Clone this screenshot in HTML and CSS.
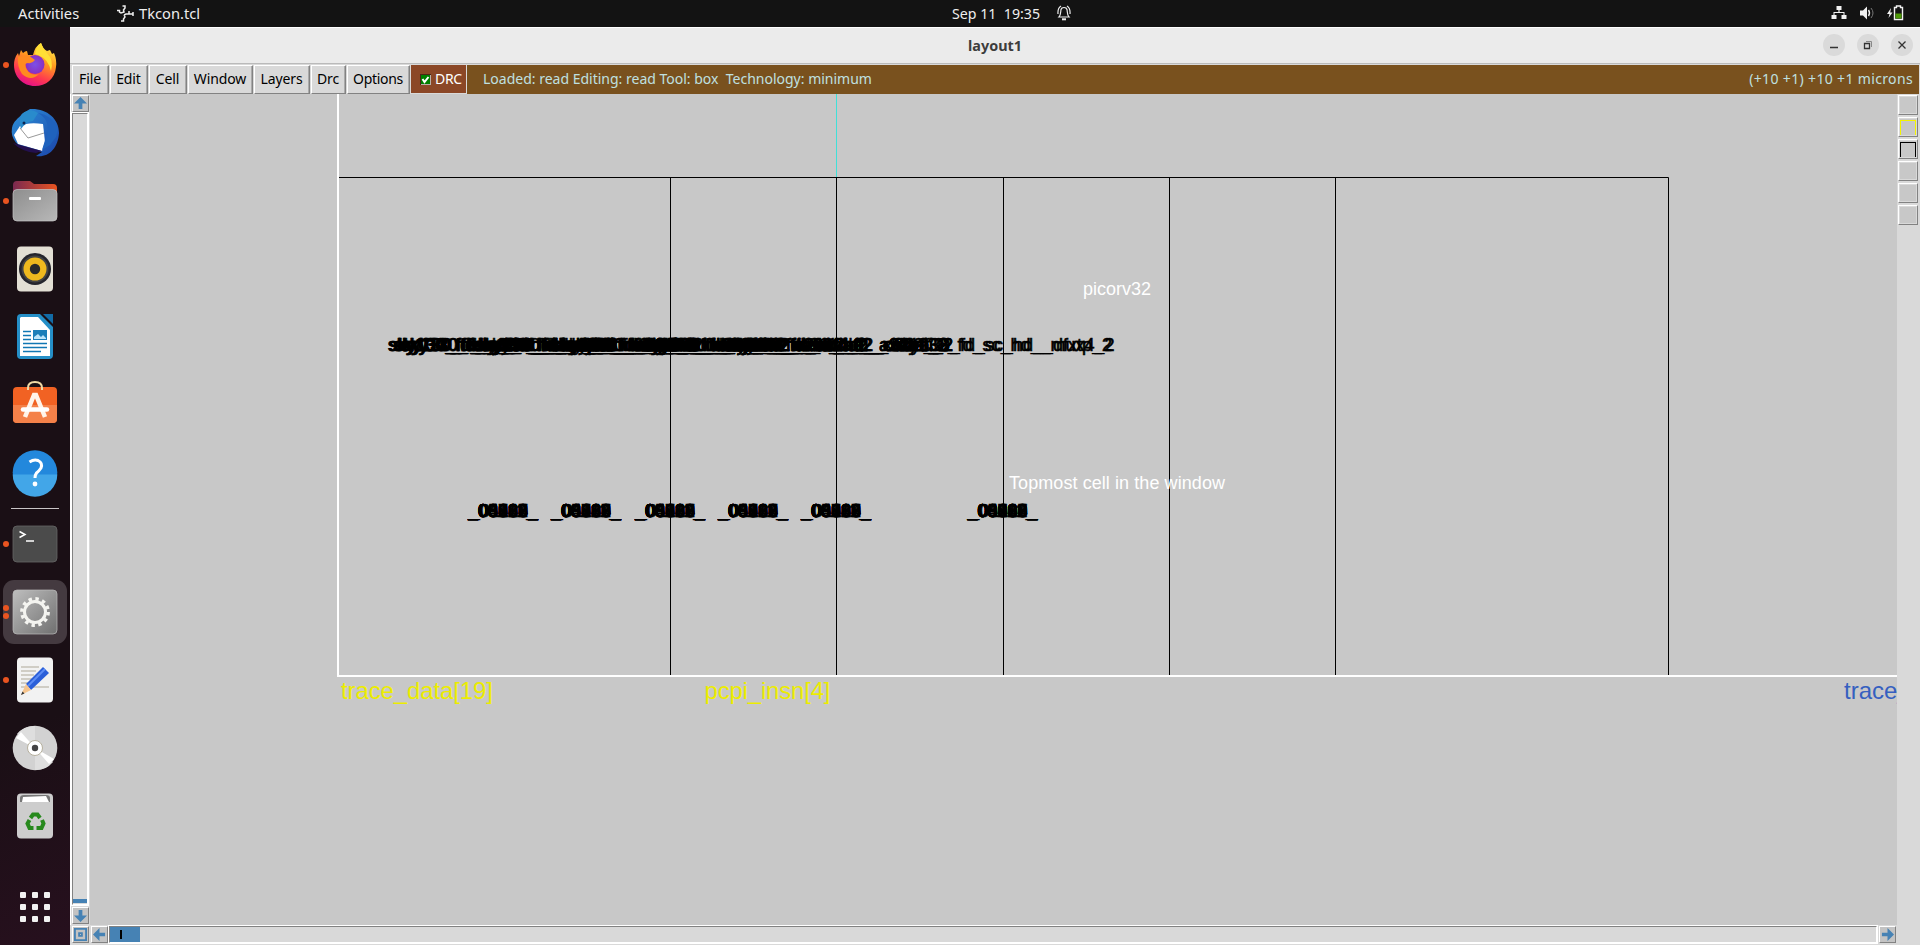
FILE: index.html
```html
<!DOCTYPE html>
<html lang="en">
<head>
<meta charset="utf-8">
<title>layout1</title>
<link rel="stylesheet" href="styles.css">
</head>
<body>
<header class="topbar">
  <span class="activities">Activities</span>
  <svg class="app-icon" width="17" height="17" viewBox="0 0 17 17" fill="none" stroke="#eee" stroke-width="1.500"><path d="M5.500 1H8V3L6.500 5L7 7L4 8L2.500 7V5.500H0M7 10L8 12L6.500 14V16H4M7 10L9 9H16M12 6V9M16 7V11"/></svg>
  <span class="app-name">Tkcon.tcl</span>
  <span class="clock">Sep 11&nbsp; 19:35</span>
  <svg class="bell" width="14" height="16" viewBox="0 0 14 16" fill="none" stroke="#eee" stroke-width="1.2"><path d="M2 12C4 10 3.5 7 4 4.500Q4.500 2.500 7 2.500T10 4.500C10.500 7 10 10 12 12ZM1 9Q0.500 3 4 1M13 9Q13.500 3 10 1"/><path d="M5 14.300H9" stroke-width="2"/></svg>
  <span class="tray">
    <svg width="16" height="14" viewBox="0 0 16 14" fill="#f2f2f2"><path d="M5.500 0H10.500V4H8.600V6H13.500V9H15.500V13H10.500V9H12.500V7H3.500V9H5.500V13H0.500V9H2.500V6H7.400V4H5.500Z"/></svg>
    <svg width="16" height="14" viewBox="0 0 16 14" fill="none" stroke="#f2f2f2"><path d="M1 4.500H4L8 0.500V13.500L4 9.500H1Z" fill="#f2f2f2" stroke="none"/><path d="M9.500 4Q11.500 7 9.500 10" stroke-width="1.400"/><path d="M12 2Q16 7 12 12" stroke="#777"/></svg>
    <svg width="17" height="16" viewBox="0 0 17 16"><path d="M4 3L0 9H2.500L1.500 13L5.500 7.500H3.200Z" fill="#f2f2f2"/><path d="M7.500 2.500H9.500V1H13.500V2.500H15.500V14.500H7.500Z" fill="none" stroke="#f2f2f2" stroke-width="1.400"/><path d="M8.500 8.500H14.500V13.500H8.500Z" fill="#4e9a06"/></svg>
  </span>
</header>
<div class="desktop">
  <nav class="dock">
    <div class="dock-item"><i class="dot"></i>
      <svg viewBox="0 0 70 68"><defs><linearGradient id="ff" x1=".8" y1="0" x2=".35" y2="1"><stop offset="0" stop-color="#fff44f"/><stop offset=".4" stop-color="#ff9a1e"/><stop offset=".75" stop-color="#ff3850"/><stop offset="1" stop-color="#e3108a"/></linearGradient><radialGradient id="fp"><stop offset="0" stop-color="#7b50e8"/><stop offset="1" stop-color="#8a2fc0"/></radialGradient></defs><path d="M21 19L23 22Q25 20 27 20L28 24H33Q35 15 41 12Q43 18 47 20L50 19L52 23L54 22Q57 29 56 36C55 48 46 55 35 55C23 55 14 46 14 34Q14 27 18 22L19 25Z" fill="url(#ff)"/><path d="M35 23Q36 15 41 12Q43 18 47 22Q54 29 51 40Q48 28 40 25Z" fill="#ffdf35"/><circle cx="35" cy="33.500" r="9.500" fill="url(#fp)"/><path d="M18 26L28 24L35 29Q32 33 28 32Q23 32 27 39Q31 45 39 43Q31 51 22 43Q17 36 18 26Z" fill="#ff8b20"/></svg></div>
    <div class="dock-item">
      <svg viewBox="0 0 70 68"><defs><linearGradient id="tb" x1="0" y1="0" x2="1" y2="1"><stop offset="0" stop-color="#2d8fd8"/><stop offset="1" stop-color="#1b45aa"/></linearGradient></defs><path d="M30 10C46 9 59 19 59 34C58 50 48 59 36 57L42 53L29 52C18 48 10 40 12 29C13 22 19 19 22 15Z" fill="url(#tb)"/><path d="M20 27Q28 23 43 25L45 43L42 52L18 45L14 36Z" fill="#fff"/><path d="M20 29L28 39L44 34" fill="none" stroke="#999"/><path d="M13 44L42 52L36 54Q22 53 13 44Z" fill="#23104f"/><path d="M22 15Q30 8 38 14L33 22Q27 22 21 30Q18 21 22 15Z" fill="#298bcc"/><path d="M38 14Q52 22 46 38L42 51L50 46L56 38L58 30Q52 16 38 14Z" fill="#1f62bd"/><circle cx="24" cy="24" r="1.500" fill="#0b2654"/></svg></div>
    <div class="dock-item"><i class="dot"></i>
      <svg viewBox="0 0 70 68"><defs><linearGradient id="fo"><stop offset="0" stop-color="#7a2950"/><stop offset="1" stop-color="#e95420"/></linearGradient><linearGradient id="gr" x1="0" y1="0" x2="1" y2="1"><stop offset="0" stop-color="#8e8e8e"/><stop offset="1" stop-color="#b8b8b8"/></linearGradient></defs><path d="M13 18Q13 14 17 14H30L34 17H53Q57 17 57 21V34H13Z" fill="url(#fo)"/><rect x="13" y="22.500" width="44" height="31.500" rx="4" fill="url(#gr)" stroke="#c5c5c5" stroke-width=".7"/><rect x="29" y="30" width="12" height="3" rx="1" fill="#fff"/></svg></div>
    <div class="dock-item">
      <svg viewBox="0 0 70 68"><rect x="17" y="11.500" width="36" height="45" rx="4" fill="#e3dfd5"/><circle cx="35" cy="34" r="16" fill="#25252d"/><circle cx="35" cy="34" r="13.500" fill="#444"/><circle cx="35" cy="34" r="11.500" fill="#efb91e"/><circle cx="35" cy="34" r="5.200" fill="#2b2b2b"/></svg></div>
    <div class="dock-item">
      <svg viewBox="0 0 70 68"><path d="M21 11H40L53 24V52Q53 56 49 56H21Q17 56 17 52V15Q17 11 21 11Z" fill="#258fc7"/><path d="M21 14H38L50 27V53H20V15Z" fill="#fff"/><path d="M43 11H53V21Z" fill="#126ba6"/><path d="M23 28.500H31M23 32.500H31M23 36.500H31M23 40.500H47M23 44.500H47M23 48.500H41" stroke="#1177b4" stroke-width="1.600"/><rect x="33" y="27" width="14" height="10" fill="#1c7fb9"/><path d="M34 36V34L38 31L41 34L43 32L46 35V36Z" fill="#bde5fa"/></svg></div>
    <div class="dock-item">
      <svg viewBox="0 0 70 68"><rect x="13" y="16" width="44" height="36" rx="4" fill="#f16223"/><path d="M13 34H57V48Q57 52 53 52H17Q13 52 13 48Z" fill="#f48149"/><path d="M28 19V17Q28 11 35 11T42 17V19" fill="none" stroke="#efd9a5" stroke-width="2"/><path d="M25 46L34 24H36L45 46" fill="none" stroke="#fff4ea" stroke-width="4.500"/><path d="M23 38.500H47" stroke="#fff" stroke-width="4.500" stroke-linecap="round"/></svg></div>
    <div class="dock-item">
      <svg viewBox="0 0 70 68"><circle cx="35" cy="33.500" r="22.300" fill="#2388dc"/><path d="M12.700 35.500H57.300A22.300 22.300 0 0 1 12.700 35.500Z" fill="#42a6e8"/><path d="M29.500 23Q34 20 38 21.500Q43 24 41 29Q39 32 36.500 34Q35 36 35 39" fill="none" stroke="#fff" stroke-width="3"/><circle cx="35" cy="45" r="2.400" fill="#fff"/></svg></div>
    <div class="dock-sep"></div>
    <div class="dock-item"><i class="dot"></i>
      <svg viewBox="0 0 70 68"><rect x="13" y="16" width="44" height="36" rx="4" fill="#4b4b4b" stroke="#666" stroke-width=".8"/><path d="M19.500 21.500L25 24.500L19.500 27.500M26 31H34" fill="none" stroke="#fff" stroke-width="1.500"/></svg></div>
    <div class="dock-item active"><i class="dot upper"></i><i class="dot lower"></i>
      <svg viewBox="0 0 70 68"><defs><linearGradient id="st" x1="0" y1="0" x2="1" y2="1"><stop offset="0" stop-color="#bebebe"/><stop offset="1" stop-color="#707070"/></linearGradient></defs><rect x="13" y="12" width="44" height="44" rx="4" fill="url(#st)" stroke="#bbb" stroke-width=".7"/><circle cx="35" cy="34" r="10.500" fill="none" stroke="#f4f4f0" stroke-width="3"/><circle cx="35" cy="34" r="13.200" fill="none" stroke="#f4f4f0" stroke-width="3.400" stroke-dasharray="3.400 3.510"/></svg></div>
    <div class="dock-item"><i class="dot"></i>
      <svg viewBox="0 0 70 68"><rect x="17" y="11.500" width="36" height="45" rx="4" fill="#f2f2f2"/><path d="M21 21H39M21 25H36M21 29H34M21 33H34M21 37H29M21 41H49" stroke="#c5c1b7" stroke-width="1.700"/><path d="M26 38L43 21L49 27L31 44Z" fill="#2b5fd9"/><path d="M28 40L45 23" stroke="#5d8cf5" stroke-width="2"/><path d="M26 38L31 44L21 49Z" fill="#f6c48d"/><path d="M22.500 45.500L24.500 47.500L21 49Z" fill="#333"/></svg></div>
    <div class="dock-item">
      <svg viewBox="0 0 70 68"><circle cx="35" cy="34" r="22.300" fill="#d2d2d2"/><path d="M35 34L17 20A22 22 0 0 1 35 12ZM35 34L53 48A22 22 0 0 1 35 56Z" fill="#dedede"/><path d="M35 34L16 24L21 18ZM35 34L49 50L54 45Z" fill="#fff"/><circle cx="35" cy="34" r="7.500" fill="#fff" stroke="#b6b09e"/><circle cx="35" cy="34" r="3.200" fill="#444"/></svg></div>
    <div class="dock-item">
      <svg viewBox="0 0 70 68"><rect x="17" y="11.500" width="36" height="45" rx="4" fill="#cdcdcd"/><path d="M20 20V16Q20 13 24 13H46Q50 13 50 16V20Z" fill="#777"/><path d="M22 20L23 15L46 14L49 20Z" fill="#fff"/><g fill="none" stroke="#27891d" stroke-width="4"><path d="M30.500 36L33 32.500H37.500L40 36"/><path d="M42 38L43.500 41.500L41.500 46H36.500"/><path d="M33.500 46H29.500L27.500 41.500L29.500 38"/></g></svg></div>
    <div class="dock-item apps">
      <svg viewBox="0 0 70 68" fill="#f2f2f2"><g id="dots"><rect x="20" y="19" width="6" height="6" rx="1"/><rect x="32" y="19" width="6" height="6" rx="1"/><rect x="44" y="19" width="6" height="6" rx="1"/></g><use href="#dots" y="12"/><use href="#dots" y="24"/></svg></div>
  </nav>
  <main class="window">
    <div class="titlebar"><span class="title">layout1</span>
      <span class="win-buttons">
        <svg viewBox="0 0 22 22"><path d="M7 13.500H15"/></svg>
        <svg viewBox="0 0 22 22"><path d="M7.500 9.500H12.500V14.500H7.500Z"/><path d="M9 7.500H14.500V13" stroke="#888" stroke-width="1"/></svg>
        <svg viewBox="0 0 22 22"><path d="M7.500 7.500L14.500 14.500M14.500 7.500L7.500 14.500"/></svg>
      </span>
    </div>
    <div class="menubar">
      <span class="menu m-file">File</span><span class="menu m-edit">Edit</span><span class="menu m-cell">Cell</span><span class="menu m-window">Window</span><span class="menu m-layers">Layers</span><span class="menu m-drc">Drc</span><span class="menu m-options">Options</span>
      <span class="drc"><svg width="11" height="11" viewBox="0 0 11 11"><rect width="11" height="11" fill="#b8b0a8"/><path d="M0 0H11V1H1V11H0Z" fill="#4a2514"/><rect x="1" y="1" width="9" height="9" fill="#007f00"/><path d="M2.500 5L4.500 8L8.500 3" fill="none" stroke="#fff" stroke-width="2"/></svg>DRC</span>
      <span class="status"><span class="status-main">Loaded: read Editing: read Tool: box&nbsp; Technology: minimum</span><span class="status-pos">(+10 +1) +10 +1 microns</span></span>
    </div>
    <div class="work">
      <div class="vscroll">
        <svg class="arrow" viewBox="0 0 14 14"><path d="M7 0L14 7H9V13H5V7H0Z"/></svg>
        <div class="vtrough"><div class="vthumb"></div></div>
        <svg class="arrow" viewBox="0 0 14 14"><path d="M7 14L0 7H5V1H9V7H14Z"/></svg>
      </div>
      <svg class="canvas" viewBox="90 94 1807 831">
        <path d="M836.500 94V178" stroke="#40e0d8" fill="none"/>
        <path d="M338 178.500V177.500H1668.500V675M670.500 178V675M836.500 178V675M1003.500 178V675M1169.500 178V675M1335.500 178V675" stroke="#000" fill="none"/>
        <path d="M338 94V676H1897" stroke="#fff" stroke-width="2" fill="none"/>
        <g id="names" class="label overdrawn"></g>
        <g class="label light"><text x="1083" y="295" textLength="68">picorv32</text><text x="1009" y="489" textLength="216">Topmost cell in the window</text></g>
        <g class="pin"><text x="341" y="699" textLength="152">trace_data[19]</text><text x="704.500" y="699" textLength="126">pcpi_insn[4]</text><text x="1844" y="699" class="blue">trace_</text></g>
      </svg>
      <div class="layers"><i></i><i class="yellow"></i><i class="black"></i><i></i><i></i><i></i></div>
    </div>
    <div class="hscroll">
      <svg class="arrow corner" viewBox="0 0 14 14"><path d="M1 1H13V13H1ZM5.500 5.500H8.500V8.500H5.500Z"/></svg>
      <svg class="arrow" viewBox="0 0 14 14"><path d="M0 7L7 0V5H13V9H7V14Z"/></svg>
      <div class="htrough"><div class="hthumb"></div></div>
      <svg class="arrow" viewBox="0 0 14 14"><path d="M14 7L7 14V9H1V5H7V0Z"/></svg>
    </div>
  </main>
</div>
<script src="labels.js"></script>
</body>
</html>
```

FILE: styles.css
```css
* { box-sizing: border-box; }
body { margin: 0; width: 1920px; height: 945px; overflow: hidden; font: 14px "Noto Sans", sans-serif; background: #1b0f16; display: flex; flex-direction: column; }
svg { display: block; }
.topbar { height: 27px; flex: none; background: #131313; color: #eee; display: flex; align-items: center; font-size: 14.7px; line-height: 27px; white-space: nowrap; padding-left: 18px; }
.topbar > span { padding-bottom: 1px; }
.activities { width: 99px; }
.app-icon { margin-right: 5px; }
.app-name { width: 813px; }
.clock { width: 105px; font-size: 14.2px; }
.bell { margin-top: -2px; }
.tray { margin-left: auto; padding-right: 16px; display: flex; align-items: center; gap: 12px; }
.desktop { flex: 1; display: flex; min-height: 0; }
.dock { width: 70px; flex: none; padding: 4px 0; display: flex; flex-direction: column; background: linear-gradient(155deg, #1a0f15 75%, #27101e); }
.dock-item { height: 68px; flex: none; position: relative; }
.dock-item svg { width: 70px; height: 68px; position: relative; }
.active::before { content: ""; position: absolute; left: 3px; top: 2px; width: 64px; height: 64px; border-radius: 11px; background: #443a40; }
.dot { position: absolute; left: 3px; top: 31px; width: 6px; height: 6px; border-radius: 50%; background: #e95420; z-index: 1; }
.upper { top: 27px; }
.lower { top: 35px; }
.dock-sep { height: 1px; flex: none; margin: 1px 11px; background: #c9c5c7; }
.apps { margin-top: auto; }
.window { flex: 1; min-width: 0; display: flex; flex-direction: column; background: #d9d9d9; }
.titlebar { height: 37px; flex: none; position: relative; background: #ebebeb; border-top: 1px solid #fff; border-bottom: 1px solid #bababa; display: flex; align-items: center; justify-content: center; color: #3d3d3d; font-weight: bold; font-size: 14.4px; }
.win-buttons { position: absolute; right: 7px; top: 6px; display: flex; gap: 12px; }
.win-buttons svg { width: 22px; height: 22px; border-radius: 50%; background: #dadada; stroke: #333; stroke-width: 1.3; fill: none; }
.menubar { height: 30px; flex: none; display: flex; padding: 1px 1px 0 2px; line-height: 26px; color: #000; white-space: nowrap; }
.menu { height: 29px; margin-right: 1px; padding-right: 1px; display: flex; justify-content: center; letter-spacing: -.1px; border: 1px solid; border-color: #fff #828282 #828282 #fff; box-shadow: inset -1px 0 #aaa; }
.m-file { width: 37px; }
.m-edit { width: 38px; }
.m-cell { width: 38px; }
.m-window { width: 65px; }
.m-layers { width: 56px; }
.m-drc { width: 35px; }
.m-options { width: 63px; letter-spacing: -.3px; }
.drc { width: 55px; height: 28px; margin-right: 1px; padding-left: 9px; background: #8b4726; color: #fff; display: flex; align-items: center; gap: 4px; letter-spacing: -.3px; }
.status { flex: 1; height: 29px; line-height: 28px; background: #79511e; color: #bfe0e0; display: flex; justify-content: space-between; padding: 0 6px 0 16px; }
.status-pos { letter-spacing: .35px; }
.work { height: 831px; flex: none; display: flex; }
.vscroll { width: 20px; padding: 1px 2px 1px 1px; border-left: 1px solid #fff; display: flex; flex-direction: column; }
.arrow { width: 17px; height: 17px; flex: none; padding: 1px; background: #c3c3c3; fill: #4682b4; border: 1px solid; border-color: #fff #828282 #828282 #fff; }
.vtrough { flex: 1; margin: 1px 0 2px; border: 1px solid; border-color: #828282 #fff #fff #828282; outline: 1px solid #fff; display: flex; flex-direction: column; justify-content: flex-end; }
.vthumb { height: 4px; background: #4682b4; margin-bottom: 1px; }
.canvas { width: 1807px; height: 831px; background: #c8c8c8; flex: none; }
.label { font: 18px "Liberation Sans", Arial, sans-serif; }
.overdrawn { fill: #000; stroke: #000; stroke-width: .6px; text-anchor: middle; }
.bar { stroke: none; }
.light { fill: #fff; }
.pin { font: 24px "Liberation Sans", Arial, sans-serif; fill: #ecec00; }
.pin .blue { fill: #355fc0; }
.layers { width: 23px; padding: 1px 2px 0 1px; display: flex; flex-direction: column; gap: 2px; }
.layers i { height: 20px; padding: 1px; background: #c8c8c8; border: 1px solid; border-color: #fff #828282 #828282 #fff; box-shadow: inset 1px 1px #d9d9d9, inset -1px -1px #d9d9d9; display: flex; }
.layers i::before { content: ""; flex: 1; margin-top: 1px; }
.layers .yellow::before { border: 1px solid #f4f400; border-bottom: 0; }
.layers .black::before { border: 1px solid #000; border-bottom: 0; }
.hscroll { height: 20px; flex: none; display: flex; padding: 1px 24px 2px 2px; }
.corner { fill: none; stroke: #4682b4; stroke-width: 2; margin-right: 2px; }
.htrough { flex: 1; margin: 0 2px 0 1px; border: 1px solid; border-color: #828282 #fff #fff #828282; outline: 1px solid #fff; display: flex; }
.hthumb { width: 30px; background: linear-gradient(#000, #000) 10px 3px / 2px 9px no-repeat #4682b4; }
```

FILE: labels.js
```js
// Cell names and instance numbers are centred in their cells and drawn over one another.
const cells = [
  [503, ["inv_2", "buf_1", "nor2_2", "and2_2", "nand2_2", "conb_1", "clkbuf_1", "decap_3"]],
  [586, ["or2_2", "a21o_2", "nand3_2", "and3_2", "a21oi_2", "o21ai_2", "xnor2_2", "a31oi_2", "a21boi_2"]],
  [670, ["or3_2", "or4_2", "a22o_2", "o211a_2", "a2111o_2", "a221oi_2", "and4bb_2", "o221ai_2"]],
  [753, ["mux2_1", "a31o_2", "a311o_2", "o2bb2a_2", "a32o_2", "o2111a_2", "nand4_2"]],
  [836, ["xor2_2", "o31ai_2", "a221oi_2", "o22ai_2", "xnor2_2", "a21boi_2", "clkbuf_8"]],
  [1002.5, ["mux4_2", "dfxtp_2"]]
];
const ids = ["_00000_", "_01111_", "_06888_", "_03444_", "_08666_", "_09999_", "_05222_", "_04737_"];
const group = document.getElementById("names");
const ns = "http://www.w3.org/2000/svg";

// Underscore runs sit one pixel higher than the font places them and carry no stroke.
function put(x, y, value) {
  const t = document.createElementNS(ns, "text");
  t.setAttribute("x", x);
  t.setAttribute("y", y);
  let raised = false;
  for (const part of value.match(/_+|[^_]+/g)) {
    const s = document.createElementNS(ns, "tspan");
    const bar = part[0] === "_";
    if (bar !== raised) s.setAttribute("dy", bar ? -1 : 1);
    if (bar) s.setAttribute("class", "bar");
    raised = bar;
    s.textContent = part;
    t.append(s);
  }
  group.append(t);
}
for (const [x, kinds] of cells) {
  for (const kind of kinds) put(x, 351, "sky130_fd_sc_hd__" + kind);
  for (const id of ids) put(x, 517, id);
}
```
